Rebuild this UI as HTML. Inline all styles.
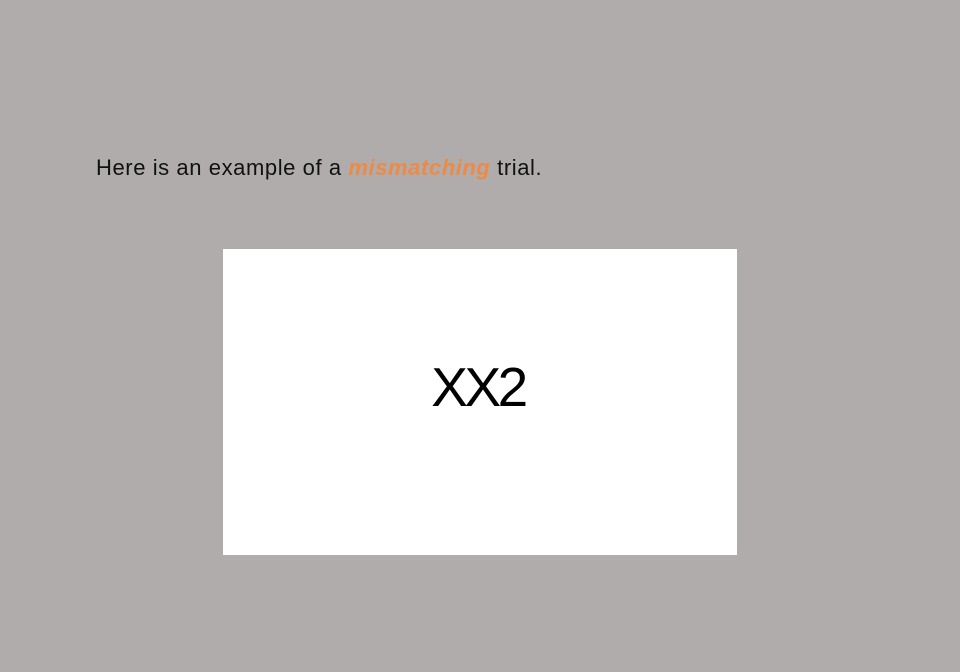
<!DOCTYPE html>
<html><head><meta charset="utf-8"><style>
html,body{margin:0;padding:0;width:960px;height:672px;background:#afacab;overflow:hidden;font-family:"Liberation Sans",sans-serif}
.t{position:absolute;left:96px;top:155px;font-size:22px;color:#111;white-space:nowrap;letter-spacing:0.58px}
.t b{color:#ee8a45;font-style:italic}
.box{position:absolute;left:223px;top:249px;width:514px;height:306px;background:#fff}
.x{position:absolute;left:-2px;width:514px;top:106px;text-align:center;font-size:55px;line-height:64px;color:#000;letter-spacing:-3.5px}
</style></head><body>
<div class="t">Here is an example of a <b>mismatching</b> trial.</div>
<div class="box"><div class="x">XX2</div></div>
</body></html>
